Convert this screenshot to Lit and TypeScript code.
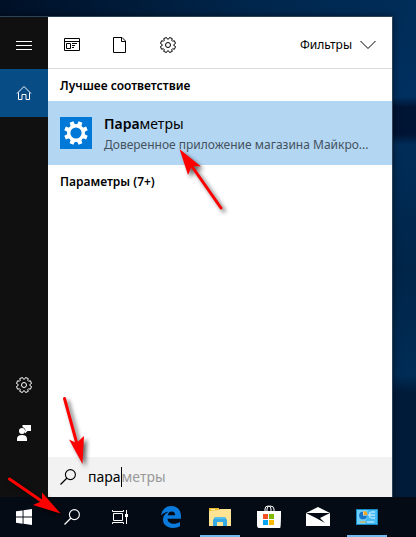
import { LitElement, html, svg, css } from "lit";
import { customElement, state } from "lit/decorators.js";

/** Closed outline of a cog centred on (c, c). */
function cog(c: number, outer: number, inner: number, wide: number, narrow: number): string {
  const teeth = 8;
  const points: string[] = [];
  for (let i = 0; i < teeth; i++) {
    const mid = ((i + 0.5) * 2 * Math.PI) / teeth;
    for (const [r, a] of [[inner, -wide], [outer, -narrow], [outer, narrow], [inner, wide]]) {
      points.push(`${(c + r * Math.cos(mid + a)).toFixed(2)} ${(c + r * Math.sin(mid + a)).toFixed(2)}`);
    }
  }
  return `M${points.join("L")}Z`;
}

const icon = (w: number, h: number, body: unknown) =>
  html`<svg width=${w} height=${h} viewBox="0 0 ${w} ${h}" aria-hidden="true">${body}</svg>`;

const line = (d: string, width = 1) =>
  svg`<path d=${d} fill="none" stroke="currentColor" stroke-width=${width} />`;

const gearOutline = icon(16, 16, svg`
  ${line(cog(8, 7.7, 5.9, 0.3, 0.19))}
  <circle cx="8" cy="8" r="2.5" fill="none" stroke="currentColor" />`);

const gearSolid = icon(24, 24, svg`
  <path d=${cog(12, 12, 8.8, 0.26, 0.17)} fill="#fff" />
  <circle cx="12" cy="12" r="7" fill="#fff" stroke="#fff" stroke-width="3.4" />
  <circle cx="12" cy="12" r="5.6" fill="#0078d7" />`);

const menuIcon = icon(16, 16, line("M0 4.5H16M0 8.5H16M0 12.5H16"));
const homeIcon = icon(16, 16, line("M1 8.5L8 1.5L15 8.5M2.5 7.5V14.5H6V9.5H10V14.5H13.5V7.5"));
const feedbackIcon = icon(16, 16, svg`
  <path d="M6.5 0H15V6H11.5L9 8.5V6.5L9.5 5Q9 3 6.5 2Z" fill="currentColor" />
  <circle cx="6" cy="6" r="3" fill="currentColor" />
  <path d="M1 16V14Q1 10 6 10Q11 10 11 14V16Z" fill="currentColor" />`);
const appsIcon = icon(16, 16, svg`
  ${line("M.5 1.5H15.5V13.5H.5ZM.5 4.5H15.5")}
  ${line("M2.5 6.5H6.5V11.5H2.5ZM8 6.5H13M8 8.5H11M8 10.5H10")}`);
const pageIcon = icon(16, 16, line("M1.5 .5H10L13.5 4V15.5H1.5ZM9.5 .5V4.5H13.5"));
const chevronIcon = icon(16, 10, line("M.5 1L8 8.5L15.5 1"));
const lensIcon = icon(16, 16, svg`
  <circle cx="10.4" cy="5.6" r="5" fill="none" stroke="currentColor" stroke-width="1.1" />
  ${line("M7 9L.5 15.5", 1.2)}`);
const startIcon = icon(16, 16, svg`
  <path d="M0 2.3L6.6 1.4V7.5H0ZM7.5 1.2L16 0V7.5H7.5ZM0 8.5H6.6V14.7L0 13.8ZM7.5 8.5H16V16L7.5 14.8Z" fill="currentColor" />`);
const taskViewIcon = icon(16, 16, svg`
  ${line("M1.5 4.5H10.5V11.5H1.5ZM.5 1V2.5H11.5V1M.5 15V13.5H11.5V15M14.5 1V15")}
  <path d="M13 5H16V8H13Z" fill="currentColor" />`);
const edgeIcon = icon(22, 24, svg`
  <path fill="#0a7bdc" d="M1 10.5C2 4.500 6 1 11 1C17.500 1 21 5.500 21 11V13.800H7.500C7.700 17.300 10.500 18.800 13.500 18.800C16 18.800 18 18.200 20 17V21.300C18 22.500 15.500 23 12.800 23C7 23 3 19.700 3 14.600C3 10.900 5 8.300 8.500 6.700C5.600 6.900 2.700 8.300 1 10.500ZM7.700 10.200H15.200C15.200 7.700 13.900 6.400 11.700 6.400C9.500 6.400 8.100 7.900 7.700 10.200Z" />`);
const folderIcon = icon(22, 20, svg`
  <path d="M0 1H10V4H0Z" fill="#eebd2f" /><path d="M2 2H6V3H2Z" fill="#fff0a8" />
  <path d="M0 4L9 3L11 2H22V19H0Z" fill="#ffe394" />
  <path d="M4 19V13L6 10H16L18 13V19H14V15H8V19Z" fill="#35a9e4" />
  <path d="M6 10H16L17 12H5Z" fill="#55bdee" />`);
const storeIcon = icon(24, 24, svg`
  <path d="M8 7V4Q8 1 11 1Q14 1 14 4V7M10 7V4Q10 1 13 1Q17 1 17 4V7" fill="none" stroke="#fff" />
  <path d="M0 6H24Q24 23 23 23H2Q0 23 0 20Z" fill="#fff" />
  <path d="M6 9H11V14H6Z" fill="#f25022" /><path d="M12 9H17V14H12Z" fill="#7fba00" />
  <path d="M6 15H11V20H6Z" fill="#00a4ef" /><path d="M12 15H17V20H12Z" fill="#ffb900" />`);
const mailIcon = icon(24, 20, svg`
  <path d="M0 6L12 0L24 6V19H0Z" fill="#fff" />
  <path d="M0 6H24L14 11L19 16L10 11Z" fill="#050b14" />`);
const controlIcon = icon(22, 18, svg`
  <path d="M0 1H22V17H0Z" fill="#168ac8" /><path d="M1 2H21V16H1Z" fill="#6bd0fb" />
  <path d="M12 2H21V16H9Z" fill="#45b9f5" />
  <circle cx="7" cy="7.500" r="4" fill="#e8f7ff" /><path d="M7 7.500V3.500A4 4 0 1 0 11 7.500Z" fill="#1778cb" />
  <path d="M7.500 7V3A4 4 0 0 1 11.500 7Z" fill="#f6a623" />
  <path d="M15 4H19M15 7H19M15 10H19M12 7H14M14 4V10" stroke="#e8f7ff" fill="none" />
  <path d="M4 14H10" stroke="#f6a623" /><path d="M11 14H18" stroke="#e8f7ff" />`);

@customElement("app-root")
export class AppRoot extends LitElement {
  @state() private query = "пара";

  static styles = css`
    :host {
      display: flex;
      flex-direction: column;
      position: relative;
      min-height: 100vh;
      box-sizing: border-box;
      overflow: hidden;
      font: 12px/20px "Noto Sans", "Open Sans", sans-serif;
      color: #000;
      background:
        linear-gradient(90deg, #001026, #00264c 60%, #002d59) top / 100% 16px no-repeat,
        linear-gradient(#002c57, #003060 18%, #001433 20%, #001433 25%, #002d58 27%, #002549 50%, #002c55 70%, #001b3a 73%, #001a38);
    }
    svg { display: block; flex: none; }
    button {
      display: flex;
      align-items: center;
      justify-content: center;
      padding: 0;
      border: 0;
      background: none;
      color: inherit;
      font: inherit;
    }
    .menu {
      flex: 1;
      display: flex;
      margin: 16px 23px 0 0;
      border: solid #2b4258;
      border-width: 1px 1px 0 0;
      background: #fff;
      box-shadow: 0 0 6px #00000080;
    }
    .rail {
      display: flex;
      flex-direction: column;
      width: 48px;
      padding: 4px 0 40px;
      box-sizing: border-box;
      background: #101010;
      color: #fff;
    }
    .rail button { height: 48px; }
    .rail .current { background: #084c86; }
    .spacer { flex: 1; }
    .results { flex: 1; min-width: 0; display: flex; flex-direction: column; }
    .filters {
      display: flex;
      height: 47px;
      padding: 4px 16px 0 0;
      border-bottom: 1px solid #dcdcdc;
    }
    .filters .scope { width: 48px; }
    .filters .more { margin-left: auto; gap: 8px; }
    .heading { margin: 0; padding: 7px 12px 5px; font-size: 12px; line-height: 20px; font-weight: 600; }
    .best {
      justify-content: flex-start;
      gap: 12px;
      height: 64px;
      padding: 0 12px;
      background: #b3d6f2;
      text-align: left;
    }
    .tile {
      display: flex;
      align-items: center;
      justify-content: center;
      flex: none;
      width: 32px;
      height: 32px;
      background: #0078d7;
    }
    .label { flex: 1; min-width: 0; padding-top: 2px; }
    .title { display: block; font-size: 14px; line-height: 22px; }
    .title b { font-weight: 600; }
    .detail {
      display: block;
      white-space: nowrap;
      color: #44525d;
    }
    .search {
      display: flex;
      align-items: center;
      height: 40px;
      margin-top: auto;
      padding-left: 12px;
      background: #f2f2f2;
      font-size: 14px;
    }
    .search input {
      field-sizing: content;
      margin-left: 12px;
      padding: 0;
      border: 0;
      outline: 0;
      background: none;
      font: inherit;
      color: #000;
    }
    .caret { width: 1px; height: 20px; background: #000; }
    .ghost { color: #999; }
    .taskbar {
      display: flex;
      height: 40px;
      background: #050b14;
      color: #fff;
    }
    .taskbar .system { width: 48px; }
    .apps { display: flex; gap: 9px; padding-left: 7px; }
    .apps button { width: 40px; box-sizing: border-box; border: solid transparent; border-width: 2px 0; }
    .apps .running { border-bottom-color: #76b9ed; }
    .pointers { position: absolute; left: 0; top: 0; filter: drop-shadow(3px 3px 2px #00000099); }
  `;

  render() {
    return html`
      <main class="menu">
        <nav class="rail">
          <button aria-label="Меню">${menuIcon}</button>
          <button class="current" aria-label="Главная">${homeIcon}</button>
          <span class="spacer"></span>
          <button aria-label="Настройки">${gearOutline}</button>
          <button aria-label="Отзывы">${feedbackIcon}</button>
        </nav>
        <section class="results">
          <div class="filters">
            <button class="scope" aria-label="Приложения">${appsIcon}</button>
            <button class="scope" aria-label="Документы">${pageIcon}</button>
            <button class="scope" aria-label="Параметры">${gearOutline}</button>
            <button class="more">Фильтры ${chevronIcon}</button>
          </div>
          <h2 class="heading">Лучшее соответствие</h2>
          <button class="best">
            <span class="tile">${gearSolid}</span>
            <span class="label">
              <span class="title"><b>Пара</b>метры</span>
              <span class="detail">Доверенное приложение магазина Майкро...</span>
            </span>
          </button>
          <h2 class="heading">Параметры (7+)</h2>
          <label class="search">
            ${lensIcon}
            <input aria-label="Поиск" .value=${this.query}
              @input=${(e: Event) => (this.query = (e.target as HTMLInputElement).value)} />
            <span class="caret"></span>
            <span class="ghost">${this.query === "пара" ? "метры" : ""}</span>
          </label>
        </section>
      </main>
      <footer class="taskbar">
        <button class="system" aria-label="Пуск">${startIcon}</button>
        <button class="system" aria-label="Поиск">${lensIcon}</button>
        <button class="system" aria-label="Представление задач">${taskViewIcon}</button>
        <div class="apps">
          <button aria-label="Edge">${edgeIcon}</button>
          <button class="running" aria-label="Проводник">${folderIcon}</button>
          <button aria-label="Магазин">${storeIcon}</button>
          <button aria-label="Почта">${mailIcon}</button>
          <button class="running" aria-label="Панель управления">${controlIcon}</button>
        </div>
      </footer>
      <svg class="pointers" width="240" height="530" viewBox="0 0 240 530" fill="#f00" stroke="#f00" aria-hidden="true">
        <path d="M179.500 149L201 166.500L192 166L188 175Z" stroke="none" />
        <path d="M191 165L221 208" stroke-width="3" stroke-linecap="round" />
        <path d="M82.500 464L69 439.500L76.500 443L84 436Z" stroke="none" />
        <path d="M64.500 398.500L77 444" stroke-width="3" stroke-linecap="round" />
        <path d="M60.500 513.500L42 492.500L42 501L33 505Z" stroke="none" />
        <path d="M9.500 479L43 502" stroke-width="3" stroke-linecap="round" />
      </svg>
    `;
  }
}
